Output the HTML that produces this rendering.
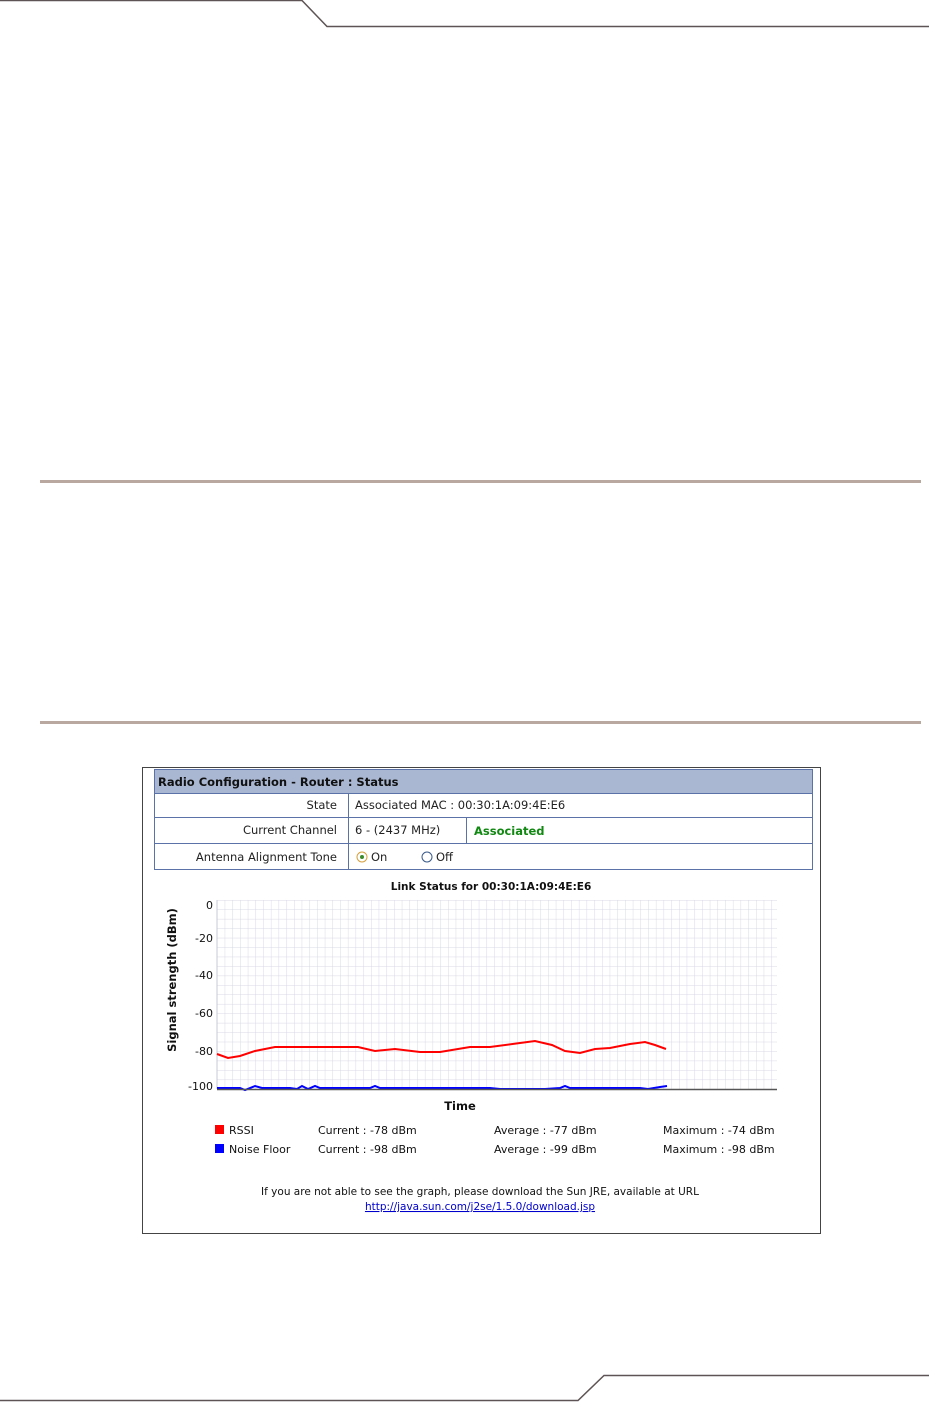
<!DOCTYPE html>
<html><head><meta charset="utf-8"><style>
html,body{margin:0;padding:0;background:#fff;width:931px;height:1402px;overflow:hidden}
svg{display:block}
text{font-family:"DejaVu Sans","Liberation Sans",sans-serif}
</style></head><body>
<svg width="931" height="1402" viewBox="0 0 931 1402" xmlns="http://www.w3.org/2000/svg">
<defs>
<pattern id="g" x="217" y="900" width="7.7" height="9.45" patternUnits="userSpaceOnUse">
<path d="M0 0V9.45M0 0H7.7" stroke="#d8d8e6" stroke-width="1" fill="none"/>
</pattern>
</defs>
<polyline points="0,0.5 302,0.5 327,26.5 929,26.5" fill="none" stroke="#5e5455" stroke-width="1.5"/>
<polyline points="0,1400.5 578,1400.5 604,1375.5 929,1375.5" fill="none" stroke="#5e5455" stroke-width="1.5"/>
<rect x="40" y="480" width="881" height="3" fill="#b8a8a0"/>
<rect x="40" y="721" width="881" height="3" fill="#b8a8a0"/>
<rect x="142.5" y="767.5" width="678" height="466" fill="#fff" stroke="#444" stroke-width="1"/>
<rect x="154.5" y="769.5" width="658" height="24" fill="#a9b7d2" stroke="#5a72a8"/>
<text x="158" y="786" font-size="11.5" font-weight="bold" fill="#111">Radio Configuration - Router : Status</text>
<rect x="154.5" y="793.5" width="658" height="76" fill="#fff" stroke="#5a72a8"/>
<line x1="154" y1="817.5" x2="813" y2="817.5" stroke="#5a72a8"/>
<line x1="154" y1="843.5" x2="813" y2="843.5" stroke="#5a72a8"/>
<line x1="348.5" y1="793" x2="348.5" y2="870" stroke="#5a72a8"/>
<line x1="466.5" y1="817" x2="466.5" y2="843" stroke="#5a72a8"/>
<g font-size="11.5" fill="#222">
<text x="337" y="809" text-anchor="end">State</text>
<text x="337" y="834" text-anchor="end">Current Channel</text>
<text x="337" y="861" text-anchor="end">Antenna Alignment Tone</text>
<text x="355" y="809">Associated MAC : 00:30:1A:09:4E:E6</text>
<text x="355" y="834">6 - (2437 MHz)</text>
<text x="371" y="861">On</text>
<text x="436" y="861">Off</text>
</g>
<text x="474" y="835" font-size="11.5" font-weight="bold" fill="#118811">Associated</text>
<circle cx="362" cy="857" r="5" fill="#fff" stroke="#d4a040"/><circle cx="362" cy="857" r="2" fill="#3a8a2a"/>
<circle cx="427" cy="857" r="5" fill="#fff" stroke="#3a5a8a"/>
<text x="491" y="890" font-size="10.5" font-weight="bold" text-anchor="middle" font-family="Liberation Sans,sans-serif" fill="#111">Link Status for 00:30:1A:09:4E:E6</text>
<rect x="217" y="900" width="560" height="189" fill="url(#g)"/>
<line x1="217" y1="900" x2="217" y2="1089" stroke="#c8c8d8"/>
<g font-size="11" fill="#111" text-anchor="end" font-family="Liberation Sans,sans-serif">
<text x="213" y="909">0</text><text x="213" y="942">-20</text><text x="213" y="979">-40</text>
<text x="213" y="1017">-60</text><text x="213" y="1055">-80</text><text x="213" y="1090">-100</text>
</g>
<text transform="translate(176,980) rotate(-90)" font-size="11.5" font-weight="bold" text-anchor="middle" fill="#111">Signal strength (dBm)</text>
<polyline fill="none" stroke="#f00" stroke-width="2" points="217,1054 228,1058 240,1056 255,1051 275,1047 320,1047 358,1047 375,1051 395,1049 420,1052 440,1052 470,1047 490,1047 520,1043 535,1041 552,1045 565,1051 580,1053 595,1049 610,1048 630,1044 645,1042 655,1045 666,1049"/>
<polyline fill="none" stroke="#00f" stroke-width="2" points="217,1088 240,1088 245,1090 255,1086 262,1088 290,1088 297,1089 302,1086 308,1089 315,1086 320,1088 330,1088 370,1088 375,1086 380,1088 440,1088 460,1088 490,1088 500,1089 545,1089 560,1088 565,1086 570,1088 640,1088 648,1089 660,1087 667,1086"/>
<line x1="217" y1="1089.5" x2="777" y2="1089.5" stroke="#555" stroke-width="1.5"/>
<text x="460" y="1110" font-size="11.5" font-weight="bold" text-anchor="middle" font-family="Liberation Sans,sans-serif" fill="#111">Time</text>
<g font-size="11" fill="#111" font-family="Liberation Sans,sans-serif">
<rect x="215" y="1125" width="9" height="9" fill="#f00"/><text x="229" y="1134">RSSI</text>
<rect x="215" y="1144" width="9" height="9" fill="#00f"/><text x="229" y="1153">Noise Floor</text>
<text x="318" y="1134">Current :   -78 dBm</text><text x="318" y="1153">Current :   -98 dBm</text>
<text x="494" y="1134">Average :  -77 dBm</text><text x="494" y="1153">Average :  -99 dBm</text>
<text x="663" y="1134">Maximum :  -74 dBm</text><text x="663" y="1153">Maximum :  -98 dBm</text>
</g>
<text x="480" y="1195" font-size="10.5" text-anchor="middle" fill="#111">If you are not able to see the graph, please download the Sun JRE, available at URL</text>
<text x="480" y="1210" font-size="10.5" text-anchor="middle" fill="#0000cc" text-decoration="underline">http://java.sun.com/j2se/1.5.0/download.jsp</text>
</svg>
</body></html>
